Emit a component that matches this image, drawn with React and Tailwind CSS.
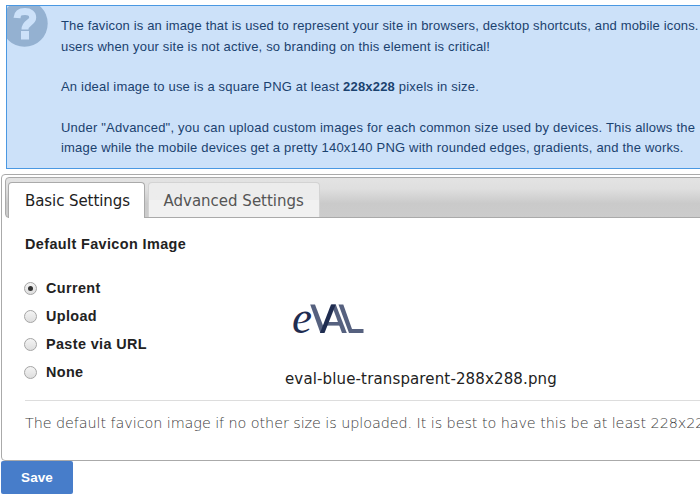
import React from "react";

const sans = "font-['Liberation_Sans',Arial,sans-serif]";
const deja = "font-['DejaVu_Sans',Verdana,sans-serif]";

const options = ["Current", "Upload", "Paste via URL", "None"];

function InfoBox() {
  return (
    <section className="relative ml-[6px] h-[164px] w-[720px] shrink-0 overflow-hidden border border-[#4a98e2] bg-[#cce1f9] pt-[10px] pl-[54px]">
      <svg className="absolute top-0 left-0" width="42" height="42" viewBox="0 0 42 42">
        <circle cx="17.5" cy="17.5" r="23.2" fill="#94b1d1" />
        <path d="M10 12 C10.500 6.500 13 5.600 18 5.600 C23 5.600 25.700 8 25.700 11.500 C25.700 17 18 16.500 18 23.500" fill="none" stroke="#cce1f9" strokeWidth="7" />
        <rect x="14" y="25" width="8" height="8.5" fill="#cce1f9" />
      </svg>
      <p className={`${sans} pt-[0.3px] text-[13px] leading-[20.25px] whitespace-nowrap text-[#1b426f]`}>
        <span className="tracking-[0.155px]">The favicon is an image that is used to represent your site in browsers, desktop shortcuts, and mobile icons.</span><br />
        <span className="tracking-[0.18px]">users when your site is not active, so branding on this element is critical!</span><br />
        <br />
        <span className="tracking-[0.19px]">An ideal image to use is a square PNG at least <b>228x228</b> pixels in size.</span><br />
        <br />
        <span className="tracking-[0.21px]">Under "Advanced", you can upload custom images for each common size used by devices. This allows the</span><br />
        <span className="tracking-[0.19px]">image while the mobile devices get a pretty 140x140 PNG with rounded edges, gradients, and the works.</span>
      </p>
    </section>
  );
}

function Radio({ checked }) {
  return (
    <span className="flex size-[13px] items-center justify-center rounded-full border border-[#a5a5a5] bg-linear-to-b from-[#f4f4f4] to-[#dedede]">
      {checked && <span className="size-[5px] rounded-full bg-[#333]" />}
    </span>
  );
}

function Logo() {
  return (
    <svg className="block" width="76" height="36" viewBox="290 301 76 36">
      <text x="292" y="332.500" fontFamily="Liberation Serif" fontStyle="italic" fontSize="46" fill="#1f2c50" textLength="20" lengthAdjust="spacingAndGlyphs">e</text>
      <g fill="#56617f">
        <path d="M310.2 304.5h4.800l8.400 22-2 6.500h-1z" />
        <path d="M331.5 304.5h4.300l11 28.500h-4.800z" />
        <path d="M327 322h13v3.600h-13z" />
        <path d="M338.500 304.500h4.800l8.700 24.500h11.500v4h-14.500z" />
      </g>
      <path d="M331 304.500h4.800l-11.300 28.500h-4.500z" fill="#1f2c50" />
    </svg>
  );
}

export default function App() {
  return (
    <div className="flex h-[502px] w-[700px] flex-col overflow-hidden bg-white pt-[5px]">
      <InfoBox />
      <section className="mt-[5px] ml-px h-[287px] w-[720px] shrink-0 rounded-[4px] border border-[#aaa] pt-[2px] pl-[3px]">
        <div className="flex h-[41px] gap-[3px] rounded-[4px] border border-[#aaa] bg-[linear-gradient(to_bottom,#e3e3e3_0%,#dfdfdf_28%,#cacaca_65%,#cccccc_100%)] pt-[4px] pl-[2px]">
          <div className={`${deja} h-[36px] w-[137px] rounded-t-[4px] border border-b-0 border-[#aaa] bg-white pt-[8px] pl-[16px] text-[15px] leading-[20px] tracking-[-0.08px] whitespace-nowrap text-[#212121]`}>Basic Settings</div>
          <div className={`${deja} h-[35px] w-[172px] rounded-t-[4px] border border-b-0 border-[#d3d3d3] bg-linear-to-b from-[#ececec] from-50% to-[#f1f1f1] to-50% pt-[8px] pl-[14.5px] text-[15px] leading-[20px] tracking-[0px] whitespace-nowrap text-[#555]`}>Advanced Settings</div>
        </div>
        <div className="pl-[20px]">
          <h2 className={`${sans} mt-[16px] text-[14.4px] leading-[20px] font-bold tracking-[0.4px] text-[#222]`}>Default Favicon Image</h2>
          <div className="mt-[21px] flex h-[125px]">
            <div className="-ml-px w-[261px]">
              {options.map((label, i) => (
                <label key={label} className={`${sans} flex h-[27.900px] items-center gap-[9px] text-[14.4px] font-bold tracking-[0.38px] text-[#222]`}>
                  <Radio checked={i === 0} />
                  {label}
                </label>
              ))}
            </div>
            <div>
              <div className="mt-[26px] ml-[5px]"><Logo /></div>
              <div className={`${deja} mt-[32px] text-[15px] leading-[20px] tracking-[0.14px] whitespace-nowrap text-[#222]`}>eval-blue-transparent-288x288.png</div>
            </div>
          </div>
          <div className={`${deja} border-t border-[#ddd] pt-[12px] text-[14.4px] leading-[20px] font-extralight tracking-[-0.08px] whitespace-nowrap text-[#3a3a3a]`}>The default favicon image if no other size is uploaded. It is best to have this be at least 228x22</div>
        </div>
      </section>
      <button className={`${sans} ml-px h-[33px] w-[72px] shrink-0 rounded-[2px] bg-[#477dca] pt-px text-[13.5px] font-bold tracking-[0.1px] text-white`}>Save</button>
    </div>
  );
}
